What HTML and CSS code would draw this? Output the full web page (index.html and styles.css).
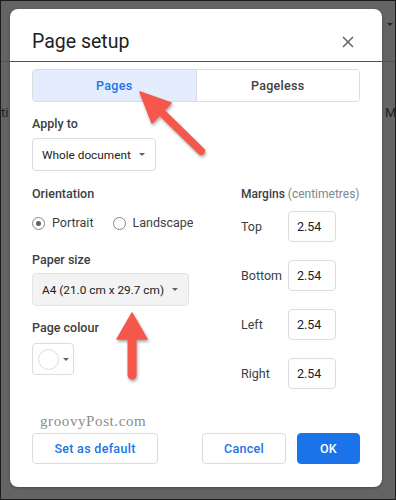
FILE: index.html
```html
<!DOCTYPE html>
<html lang="en">
<head>
    <meta charset="UTF-8">
    <meta name="viewport" content="width=device-width, initial-scale=1.0">
    <title>Page setup</title>
    <link rel="stylesheet" href="styles.css">
</head>
<body>
<div class="screen">
    <!-- dimmed document behind the dialog -->
    <div class="backdrop-line"></div>
    <span class="backdrop-text left">ti</span>
    <span class="backdrop-text right">M</span>
    <span class="backdrop-caret"></span>

    <div class="dialog">
        <div class="dialog-head">
            <h1>Page setup</h1>
            <button class="close" aria-label="Close">
                <svg width="12" height="12" viewBox="0 0 12 12"><path d="M1 1L11 11M11 1L1 11" stroke="#5f6368" stroke-width="1.5"/></svg>
            </button>
        </div>

        <div class="toggle">
            <button class="toggle-btn active">Pages</button>
            <button class="toggle-btn">Pageless</button>
        </div>

        <div class="label apply-label">Apply to</div>
        <button class="select">Whole document <span class="caret"></span></button>

        <div class="columns">
            <div class="col-left">
                <div class="label">Orientation</div>
                <div class="radios">
                    <label class="radio"><span class="dot checked"></span>Portrait</label>
                    <label class="radio"><span class="dot"></span>Landscape</label>
                </div>

                <div class="label paper-label">Paper size</div>
                <button class="select paper">A4 (21.0 cm x 29.7 cm) <span class="caret"></span></button>

                <div class="label colour-label">Page colour</div>
                <button class="colour-btn"><span class="swatch"></span><span class="caret"></span></button>
            </div>

            <div class="col-right">
                <div class="label margins-label">Margins <span class="unit">(centimetres)</span></div>
                <div class="margin-row"><span>Top</span><input class="margin-input" value="2.54"></div>
                <div class="margin-row"><span>Bottom</span><input class="margin-input" value="2.54"></div>
                <div class="margin-row"><span>Left</span><input class="margin-input" value="2.54"></div>
                <div class="margin-row"><span>Right</span><input class="margin-input" value="2.54"></div>
            </div>
        </div>

        <div class="watermark">groovyPost.com</div>

        <div class="footer">
            <button class="btn">Set as default</button>
            <div class="footer-right">
                <button class="btn cancel">Cancel</button>
                <button class="btn primary">OK</button>
            </div>
        </div>
    </div>

    <!-- annotation arrows -->
    <svg class="arrows" width="396" height="500" viewBox="0 0 396 500">
        <g fill="#f5574b" stroke="#f5574b">
            <line x1="200" y1="150" x2="156" y2="107" stroke-width="8" stroke-linecap="round"/>
            <polygon points="139,91 170,102 151,122" stroke-width="1.5" stroke-linejoin="round"/>
            <line x1="131" y1="332" x2="131" y2="374" stroke-width="9" stroke-linecap="round"/>
            <polygon points="131,312 146,338 116,338" stroke-width="1.5" stroke-linejoin="round"/>
        </g>
    </svg>
</div>
</body>
</html>
```

FILE: styles.css
```css
* {
    box-sizing: border-box;
}
body {
    margin: 0;
    font-family: Roboto, "Liberation Sans", Arial, sans-serif;
    color: #202124;
}
.screen {
    position: relative;
    width: 396px;
    height: 500px;
    background-color: #646464;
    border: 1px solid #1c1c1c;
    overflow: hidden;
    padding-top: 8px;
    padding-left: 9px;
}
.backdrop-line {
    position: absolute;
    left: 0;
    right: 0;
    top: 60px;
    height: 1px;
    background-color: #525252;
}
.backdrop-text {
    position: absolute;
    top: 104px;
    font-size: 13px;
    color: #1f1f1f;
}
.backdrop-text.left {
    left: 0;
}
.backdrop-text.right {
    left: 384px;
}
.backdrop-caret {
    position: absolute;
    left: 386px;
    top: 22px;
    border-left: 3px solid transparent;
    border-right: 3px solid transparent;
    border-top: 3px solid #222;
}

.dialog {
    width: 372px;
    height: 478px;
    background-color: #fff;
    border-radius: 8px;
    padding: 19px 22px 0 22px;
    box-shadow: 0 1px 3px rgba(0, 0, 0, 0.3);
}
.dialog-head {
    display: flex;
    justify-content: space-between;
    align-items: center;
}
h1 {
    margin: 0;
    font-size: 19.5px;
    font-weight: 400;
    line-height: 28px;
    color: #202124;
}
.close {
    border: none;
    background: none;
    padding: 0;
    margin-right: 6px;
    display: flex;
}

button {
    font-family: inherit;
}
.toggle {
    display: flex;
    margin-top: 13px;
    height: 33px;
    border: 1px solid #dadce0;
    border-radius: 4px;
    overflow: hidden;
}
.toggle-btn {
    flex: 1;
    border: none;
    background-color: #fff;
    font-size: 12.5px;
    font-weight: 500;
    letter-spacing: 0.3px;
    color: #3c4043;
}
.toggle-btn.active {
    background-color: #e3edfd;
    color: #1a73e8;
    border-right: 1px solid #dadce0;
}

.label {
    font-size: 12.5px;
    font-weight: 500;
    line-height: 20px;
    color: #3c4043;
    white-space: nowrap;
}
.apply-label {
    margin-top: 12px;
}
.select {
    display: flex;
    align-items: center;
    gap: 8px;
    height: 33px;
    margin-top: 4px;
    padding: 0 10px 0 9px;
    border: 1px solid #dadce0;
    border-radius: 4px;
    background-color: #fff;
    font-size: 11.8px;
    color: #202124;
}
.select.paper {
    margin-top: 3px;
    background-color: #f3f3f3;
    border-color: #e3e3e3;
}
.caret {
    display: inline-block;
    border-left: 3.5px solid transparent;
    border-right: 3.5px solid transparent;
    border-top: 3.5px solid #5f6368;
}

.columns {
    display: flex;
    margin-top: 13px;
}
.col-left {
    width: 209px;
    flex-shrink: 0;
}
.col-right {
    flex: 1;
    min-width: 0;
}
.margins-label {
    font-size: 12px;
}
.radios {
    display: flex;
    gap: 19px;
    margin-top: 9px;
}
.radio {
    display: flex;
    align-items: center;
    gap: 7px;
    font-size: 12.5px;
    line-height: 20px;
    color: #3c4043;
}
.dot {
    width: 13px;
    height: 13px;
    border: 1px solid #80868b;
    border-radius: 50%;
    display: flex;
    align-items: center;
    justify-content: center;
}
.dot.checked::after {
    content: "";
    width: 5px;
    height: 5px;
    border-radius: 50%;
    background-color: #5f6368;
}
.paper-label {
    margin-top: 17px;
}
.colour-label {
    margin-top: 12px;
}
.colour-btn {
    display: flex;
    align-items: center;
    gap: 4px;
    margin-top: 5px;
    height: 32px;
    width: 42px;
    padding: 0 0 0 5px;
    border: 1px solid #dadce0;
    border-radius: 4px;
    background-color: #fff;
}
.swatch {
    width: 21px;
    height: 21px;
    border: 1px solid #dadce0;
    border-radius: 50%;
}

.unit {
    font-weight: 400;
    color: #80868b;
}
.margin-row {
    display: flex;
    align-items: center;
    margin-top: 7px;
    font-size: 12.5px;
    color: #3c4043;
}
.margin-row + .margin-row {
    margin-top: 18px;
}
.margin-row span {
    width: 47px;
}
.margin-input {
    width: 48px;
    height: 31px;
    border: 1px solid #dadce0;
    border-radius: 4px;
    padding: 0 0 0 8px;
    font-family: inherit;
    font-size: 12.5px;
    color: #202124;
}

.watermark {
    margin-top: 22px;
    padding-left: 8px;
    font-family: "Liberation Serif", "Times New Roman", serif;
    font-size: 15px;
    letter-spacing: 0.6px;
    line-height: 20px;
    color: #8c8c8c;
}
.footer {
    display: flex;
    justify-content: space-between;
    margin-top: 2px;
}
.footer-right {
    display: flex;
    gap: 11px;
}
.btn {
    height: 31px;
    width: 126px;
    border: 1px solid #dadce0;
    border-radius: 4px;
    background-color: #fff;
    font-size: 12.5px;
    font-weight: 500;
    letter-spacing: 0.3px;
    color: #1a73e8;
}
.btn.cancel {
    width: 84px;
}
.btn.primary {
    width: 63px;
    background-color: #1a73e8;
    border-color: #1a73e8;
    color: #fff;
}

.arrows {
    position: absolute;
    left: 0;
    top: 0;
    pointer-events: none;
    filter: drop-shadow(1px 2px 1.5px rgba(0, 0, 0, 0.35));
}
```
